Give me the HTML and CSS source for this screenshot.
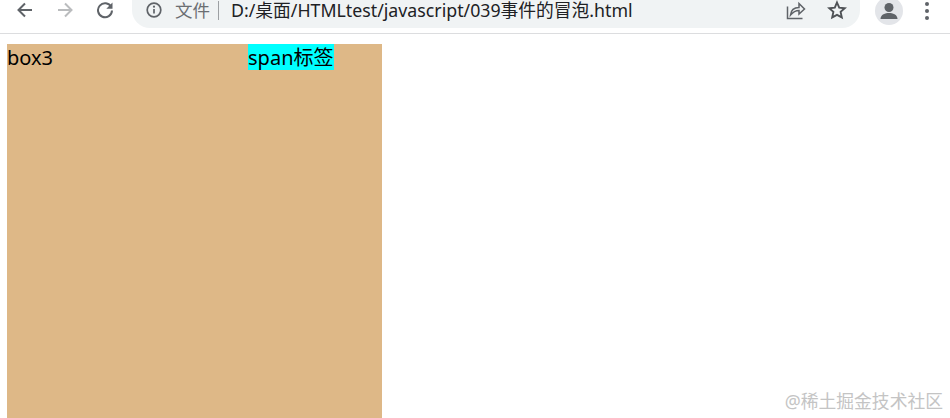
FILE: index.html
```html
<!DOCTYPE html>
<html lang="en">

<head>
    <meta charset="UTF-8">
    <title>039事件的冒泡</title>
    <link rel="stylesheet" href="styles.css">
</head>

<body>
    <!-- browser toolbar -->
    <header class="toolbar">
        <svg class="nav-icon" viewBox="0 0 18 18"><path d="M16 9H3M9 2.500 2.500 9 9 15.500" /></svg>
        <svg class="nav-icon nav-off" viewBox="0 0 18 18"><path d="M2 9h13M9 2.500 15.500 9 9 15.500" /></svg>
        <svg class="nav-icon" viewBox="0 0 18 18"><path d="M15.200 6A7 7 0 1 0 16 9.500" /><path class="solid" d="M16.500 1.500v6.200h-6.200z" /></svg>
        <div class="omnibox">
            <svg class="info-icon" viewBox="0 0 16 16">
                <circle cx="8" cy="8" r="6.800" />
                <path d="M8 7v4.600" />
                <circle class="solid" cx="8" cy="4.700" r="1.100" />
            </svg>
            <span class="scheme">文件</span>
            <span class="divider"></span>
            <span class="url">D:/桌面/HTMLtest/javascript/039事件的冒泡.html</span>
            <svg class="share-icon" viewBox="0 0 20 20">
                <path d="M1.500 6.500v12h15" />
                <path d="M4.500 15c.5-4.500 3.500-7.500 8.500-7.500V3.500l5.500 5.500-5.500 5v-3.500c-3.500 0-6 1.500-8.500 4.500z" />
            </svg>
            <svg class="star-icon" viewBox="0 0 20 20"><path d="M10 2.500l2.200 5.200 5.600.5-4.200 3.700 1.200 5.500L10 14.900l-4.800 2.500 1.200-5.500-4.200-3.700 5.600-.5z" /></svg>
        </div>
        <div class="avatar">
            <svg viewBox="0 0 28 28">
                <circle cx="14" cy="10.500" r="4.500" />
                <path d="M5.500 22c0-4.500 5-6 8.500-6s8.500 1.500 8.500 6z" />
            </svg>
        </div>
        <div class="menu-dots"><i></i><i></i><i></i></div>
    </header>

    <!-- page content -->
    <main class="page">
        <div class="box3">
            box3
            <span class="tag">span标签</span>
        </div>
    </main>

    <div class="watermark">@稀土掘金技术社区</div>
</body>

</html>
```

FILE: styles.css
```css
html,
body {
    margin: 0;
    height: 100%;
    overflow: hidden;
}

body {
    background: #fff;
    font-family: "Noto Sans", "Noto Sans CJK SC", sans-serif;
    color: #000;
}

.toolbar {
    display: flex;
    align-items: flex-start;
    height: 33px;
    border-bottom: 1px solid #dcdddf;
    padding-left: 16px;
}

.nav-icon {
    width: 18px;
    height: 18px;
    margin-right: 22px;
    margin-top: 1px;
    fill: none;
    stroke: #5f6368;
    stroke-width: 2;
}

.nav-icon .solid {
    fill: #5f6368;
    stroke: none;
}

.nav-off {
    stroke: #babcbe;
}

.omnibox {
    display: flex;
    align-items: center;
    width: 728px;
    height: 28px;
    margin-left: -4px;
    padding: 0 13px 8px 14px;
    box-sizing: border-box;
    background: #f0f3f4;
    border-radius: 0 0 18px 18px;
}

.info-icon {
    width: 16px;
    height: 16px;
    fill: none;
    stroke: #5f6368;
    stroke-width: 1.700;
}

.info-icon .solid {
    fill: #5f6368;
    stroke: none;
}

.scheme {
    margin-left: 13px;
    font-size: 17.500px;
    line-height: 20px;
    color: #6b6e72;
}

.divider {
    width: 1px;
    height: 19px;
    margin: 0 12px 0 8px;
    background: #9da0a3;
}

.url {
    flex: 1;
    font-size: 17.750px;
    line-height: 20px;
    color: #202124;
    white-space: nowrap;
}

.share-icon {
    width: 20px;
    height: 20px;
    margin-right: 21px;
    fill: none;
    stroke: #5f6368;
    stroke-width: 1.500;
}

.star-icon {
    width: 20px;
    height: 20px;
    fill: none;
    stroke: #4f5256;
    stroke-width: 1.900;
}

.avatar {
    width: 28px;
    height: 28px;
    margin: -3px 0 0 15px;
    border-radius: 50%;
    background: #e3e5e9;
}

.avatar svg {
    display: block;
    fill: #5f6368;
}

.menu-dots {
    display: flex;
    flex-direction: column;
    gap: 3px;
    margin: 2px 0 0 22px;
}

.menu-dots i {
    width: 4px;
    height: 4px;
    border-radius: 50%;
    background: #5f6368;
}

.page {
    padding: 10px 0 0 7px;
}

.box3 {
    display: flex;
    align-items: flex-start;
    width: 375px;
    height: 374px;
    background: burlywood;
    font-size: 20px;
    line-height: 27px;
}

.tag {
    margin-left: 195px;
    height: 26px;
    background: #00ffff;
}

.watermark {
    position: absolute;
    right: 7px;
    bottom: 5px;
    font-size: 17.800px;
    color: #c4c4c4;
}
```
